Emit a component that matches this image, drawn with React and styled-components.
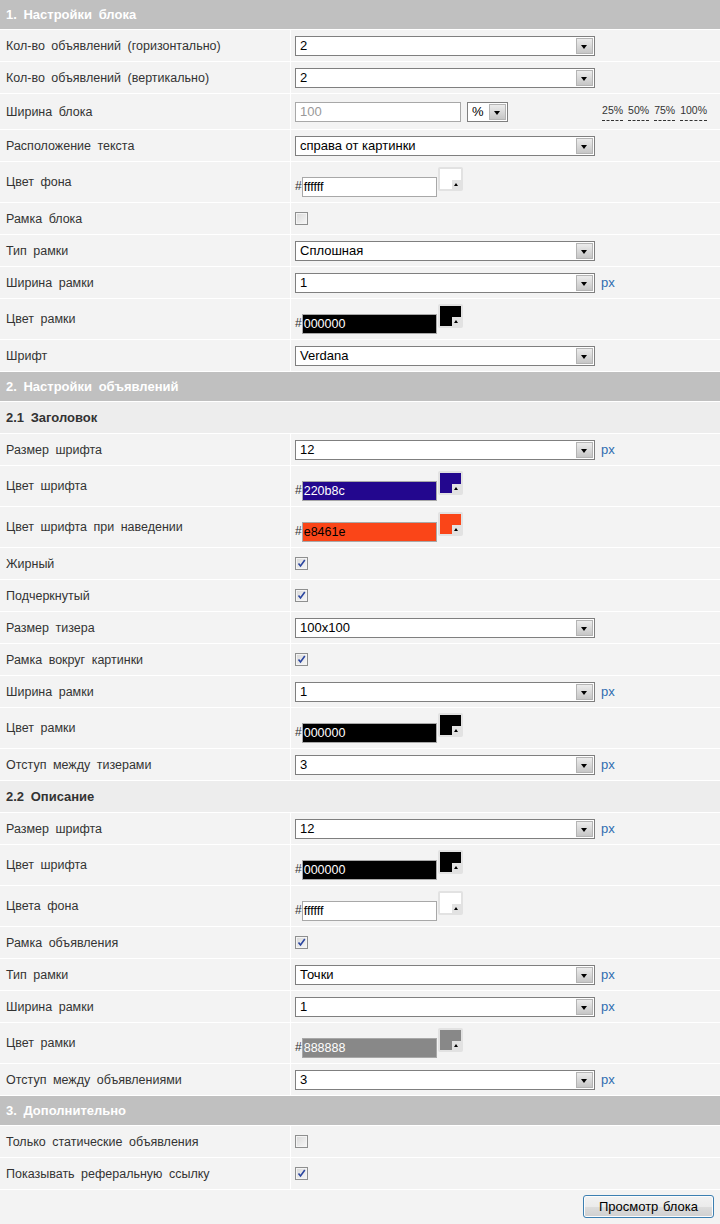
import React from "react";
import styled, { createGlobalStyle } from "styled-components";

const GlobalStyle = createGlobalStyle`
  body {
    margin: 0;
    background: #f3f3f3;
    font-family: "Liberation Sans", Arial, sans-serif;
  }
`;

const Panel = styled.div`
  width: 720px;
  background: #f3f3f3;
  color: #333;
  font-size: 12.5px;
  word-spacing: 3px;
`;

const SectionHeader = styled.div`
  display: flex;
  align-items: center;
  height: 29px;
  padding-left: 6px;
  background: #c0c0c0;
  border-bottom: 1px solid #fff;
  color: #fff;
  font-size: 13px;
  font-weight: bold;
`;

const SubHeader = styled.div`
  display: flex;
  align-items: center;
  height: 31px;
  padding-left: 6px;
  background: #ededed;
  border-bottom: 1px solid #fff;
  color: #333;
  font-size: 13px;
  font-weight: bold;
`;

const Row = styled.div`
  display: grid;
  grid-template-columns: 291px 1fr;
  height: ${(p) => p.$h || 31}px;
  border-bottom: 1px solid #fff;
`;

const Label = styled.div`
  display: flex;
  align-items: center;
  padding-left: 6px;
  border-right: 1px solid #fff;
`;

const Field = styled.div`
  display: flex;
  align-items: ${(p) => (p.$top ? "flex-start" : "center")};
  padding: ${(p) => (p.$top ? "5px 0 0 4px" : "0 0 0 4px")};
  padding-right: 13px;
`;

const SelectBox = styled.div`
  display: flex;
  align-items: center;
  box-sizing: border-box;
  width: ${(p) => p.$w || 300}px;
  height: 20px;
  background: #fff;
  border: 1px solid #7f7f7f;
  color: #000;
  font-size: 13px;
  word-spacing: 0;
`;

const SelectValue = styled.span`
  flex: 1;
  padding-left: 4px;
  white-space: nowrap;
  overflow: hidden;
`;

const SelectArrow = styled.span`
  position: relative;
  box-sizing: border-box;
  width: 17px;
  height: 16px;
  margin-right: 1px;
  border: 1px solid #b4b4b4;
  background: linear-gradient(#ececec, #c6c6c6);

  &::after {
    content: "";
    position: absolute;
    left: 4px;
    top: 6px;
    border-left: 3.5px solid transparent;
    border-right: 3.5px solid transparent;
    border-top: 4px solid #000;
  }
`;

const Unit = styled.span`
  margin-left: 6px;
  color: #2e6cb0;
  font-size: 13px;
`;

const TextInput = styled.div`
  box-sizing: border-box;
  width: 166px;
  height: 20px;
  padding: 2px 4px;
  background: #fff;
  border: 1px solid #a8a8a8;
  color: #999;
  font-size: 13px;
  line-height: 14px;
  margin-right: 6px;
`;

const PercentLinks = styled.div`
  display: flex;
  gap: 5px;
  margin-left: auto;
  margin-top: 2px;
  font-size: 10.5px;
  word-spacing: 0;
`;

const PercentLink = styled.span`
  padding-bottom: 4px;
  border-bottom: 1px dashed #333;
  color: #333;
`;

const Hash = styled.span`
  margin-top: 12px;
  color: #333;
  font-size: 12px;
`;

const ColorInput = styled.div`
  box-sizing: border-box;
  width: 135px;
  height: 20px;
  margin-top: 10px;
  padding: 2px 1px;
  background: ${(p) => p.$bg};
  border: 1px solid #a8a8a8;
  color: ${(p) => p.$fg};
  font-size: 12.5px;
  line-height: 14px;
  word-spacing: 0;
`;

const Swatch = styled.div`
  position: relative;
  box-sizing: border-box;
  width: 25px;
  height: 24px;
  padding: 2px;
  margin-left: 1px;
  background: #e2e2e2;
  border-radius: 2px;
`;

const SwatchFill = styled.div`
  width: 100%;
  height: 100%;
  background: ${(p) => p.$bg};
`;

const SwatchCorner = styled.span`
  position: absolute;
  right: 2px;
  bottom: 2px;
  width: 9px;
  height: 9px;
  background: #e2e2e2;

  &::after {
    content: "";
    position: absolute;
    left: 2px;
    top: 3px;
    border-left: 2.5px solid transparent;
    border-right: 2.5px solid transparent;
    border-bottom: 3px solid #000;
  }
`;

const CheckBox = styled.span`
  display: flex;
  align-items: center;
  justify-content: center;
  box-sizing: border-box;
  width: 13px;
  height: 13px;
  border: 1px solid #8e8f8f;
  background: linear-gradient(135deg, #d8d8d8, #f8f8f8);
  box-shadow: inset 0 0 0 1px #f4f4f4;
`;

const Footer = styled.div`
  display: flex;
  justify-content: flex-end;
  padding: 5px 6px 5px 0;
`;

const Button = styled.button`
  width: 131px;
  height: 23px;
  padding: 0;
  border: 1px solid #3c7fb1;
  border-radius: 3px;
  background: linear-gradient(#f2f2f2 0%, #ebebeb 50%, #dddddd 51%, #cfcfcf 100%);
  box-shadow: inset 0 0 0 1px #fcfcfc;
  color: #000;
  font-family: "Liberation Sans", Arial, sans-serif;
  font-size: 13px;
  word-spacing: 1px;
`;

const Select = ({ value, width }) => (
  <SelectBox $w={width}>
    <SelectValue>{value}</SelectValue>
    <SelectArrow />
  </SelectBox>
);

const Check = ({ checked }) => (
  <CheckBox>
    {checked && (
      <svg width="9" height="9" viewBox="0 0 9 9">
        <path d="M1.5 4.5 L3.5 7 L7.8 1" fill="none" stroke="#2b46a0" strokeWidth="1.6" />
      </svg>
    )}
  </CheckBox>
);

const darkText = { "000000": "#fff", "220b8c": "#fff", "888888": "#fff" };
const shown = { "220b8c": "#23078e", e8461e: "#fa4518" };

const Color = ({ value }) => {
  const bg = shown[value] || "#" + value;
  return (
    <>
      <Hash>#</Hash>
      <ColorInput $bg={bg} $fg={darkText[value] || "#000"}>
        {value}
      </ColorInput>
      <Swatch>
        <SwatchFill $bg={bg} />
        <SwatchCorner />
      </Swatch>
    </>
  );
};

const sections = [
  {
    title: "1. Настройки блока",
    items: [
      { label: "Кол-во объявлений (горизонтально)", type: "select", value: "2" },
      { label: "Кол-во объявлений (вертикально)", type: "select", value: "2" },
      { label: "Ширина блока", type: "width", value: "100" },
      { label: "Расположение текста", type: "select", value: "справа от картинки" },
      { label: "Цвет фона", type: "color", value: "ffffff" },
      { label: "Рамка блока", type: "check", value: false },
      { label: "Тип рамки", type: "select", value: "Сплошная" },
      { label: "Ширина рамки", type: "select", value: "1", unit: true },
      { label: "Цвет рамки", type: "color", value: "000000" },
      { label: "Шрифт", type: "select", value: "Verdana" },
    ],
  },
  {
    title: "2. Настройки объявлений",
    items: [
      { sub: "2.1 Заголовок" },
      { label: "Размер шрифта", type: "select", value: "12", unit: true },
      { label: "Цвет шрифта", type: "color", value: "220b8c" },
      { label: "Цвет шрифта при наведении", type: "color", value: "e8461e" },
      { label: "Жирный", type: "check", value: true },
      { label: "Подчеркнутый", type: "check", value: true },
      { label: "Размер тизера", type: "select", value: "100x100" },
      { label: "Рамка вокруг картинки", type: "check", value: true },
      { label: "Ширина рамки", type: "select", value: "1", unit: true },
      { label: "Цвет рамки", type: "color", value: "000000" },
      { label: "Отступ между тизерами", type: "select", value: "3", unit: true },
      { sub: "2.2 Описание" },
      { label: "Размер шрифта", type: "select", value: "12", unit: true },
      { label: "Цвет шрифта", type: "color", value: "000000" },
      { label: "Цвета фона", type: "color", value: "ffffff" },
      { label: "Рамка объявления", type: "check", value: true },
      { label: "Тип рамки", type: "select", value: "Точки", unit: true },
      { label: "Ширина рамки", type: "select", value: "1", unit: true },
      { label: "Цвет рамки", type: "color", value: "888888" },
      { label: "Отступ между объявлениями", type: "select", value: "3", unit: true },
    ],
  },
  {
    title: "3. Дополнительно",
    items: [
      { label: "Только статические объявления", type: "check", value: false },
      { label: "Показывать реферальную ссылку", type: "check", value: true },
    ],
  },
];

const heights = { color: 40, width: 35 };

const FieldContent = ({ item }) => {
  switch (item.type) {
    case "select":
      return (
        <>
          <Select value={item.value} />
          {item.unit && <Unit>px</Unit>}
        </>
      );
    case "width":
      return (
        <>
          <TextInput>{item.value}</TextInput>
          <Select value="%" width={41} />
          <PercentLinks>
            {["25%", "50%", "75%", "100%"].map((p) => (
              <PercentLink key={p}>{p}</PercentLink>
            ))}
          </PercentLinks>
        </>
      );
    case "color":
      return <Color value={item.value} />;
    case "check":
      return <Check checked={item.value} />;
    default:
      return null;
  }
};

export default function App() {
  return (
    <>
      <GlobalStyle />
      <Panel>
        {sections.map((section) => (
          <React.Fragment key={section.title}>
            <SectionHeader>{section.title}</SectionHeader>
            {section.items.map((item, i) =>
              item.sub ? (
                <SubHeader key={i}>{item.sub}</SubHeader>
              ) : (
                <Row key={i} $h={heights[item.type]}>
                  <Label>{item.label}</Label>
                  <Field $top={item.type === "color"}>
                    <FieldContent item={item} />
                  </Field>
                </Row>
              )
            )}
          </React.Fragment>
        ))}
        <Footer>
          <Button>Просмотр блока</Button>
        </Footer>
      </Panel>
    </>
  );
}
